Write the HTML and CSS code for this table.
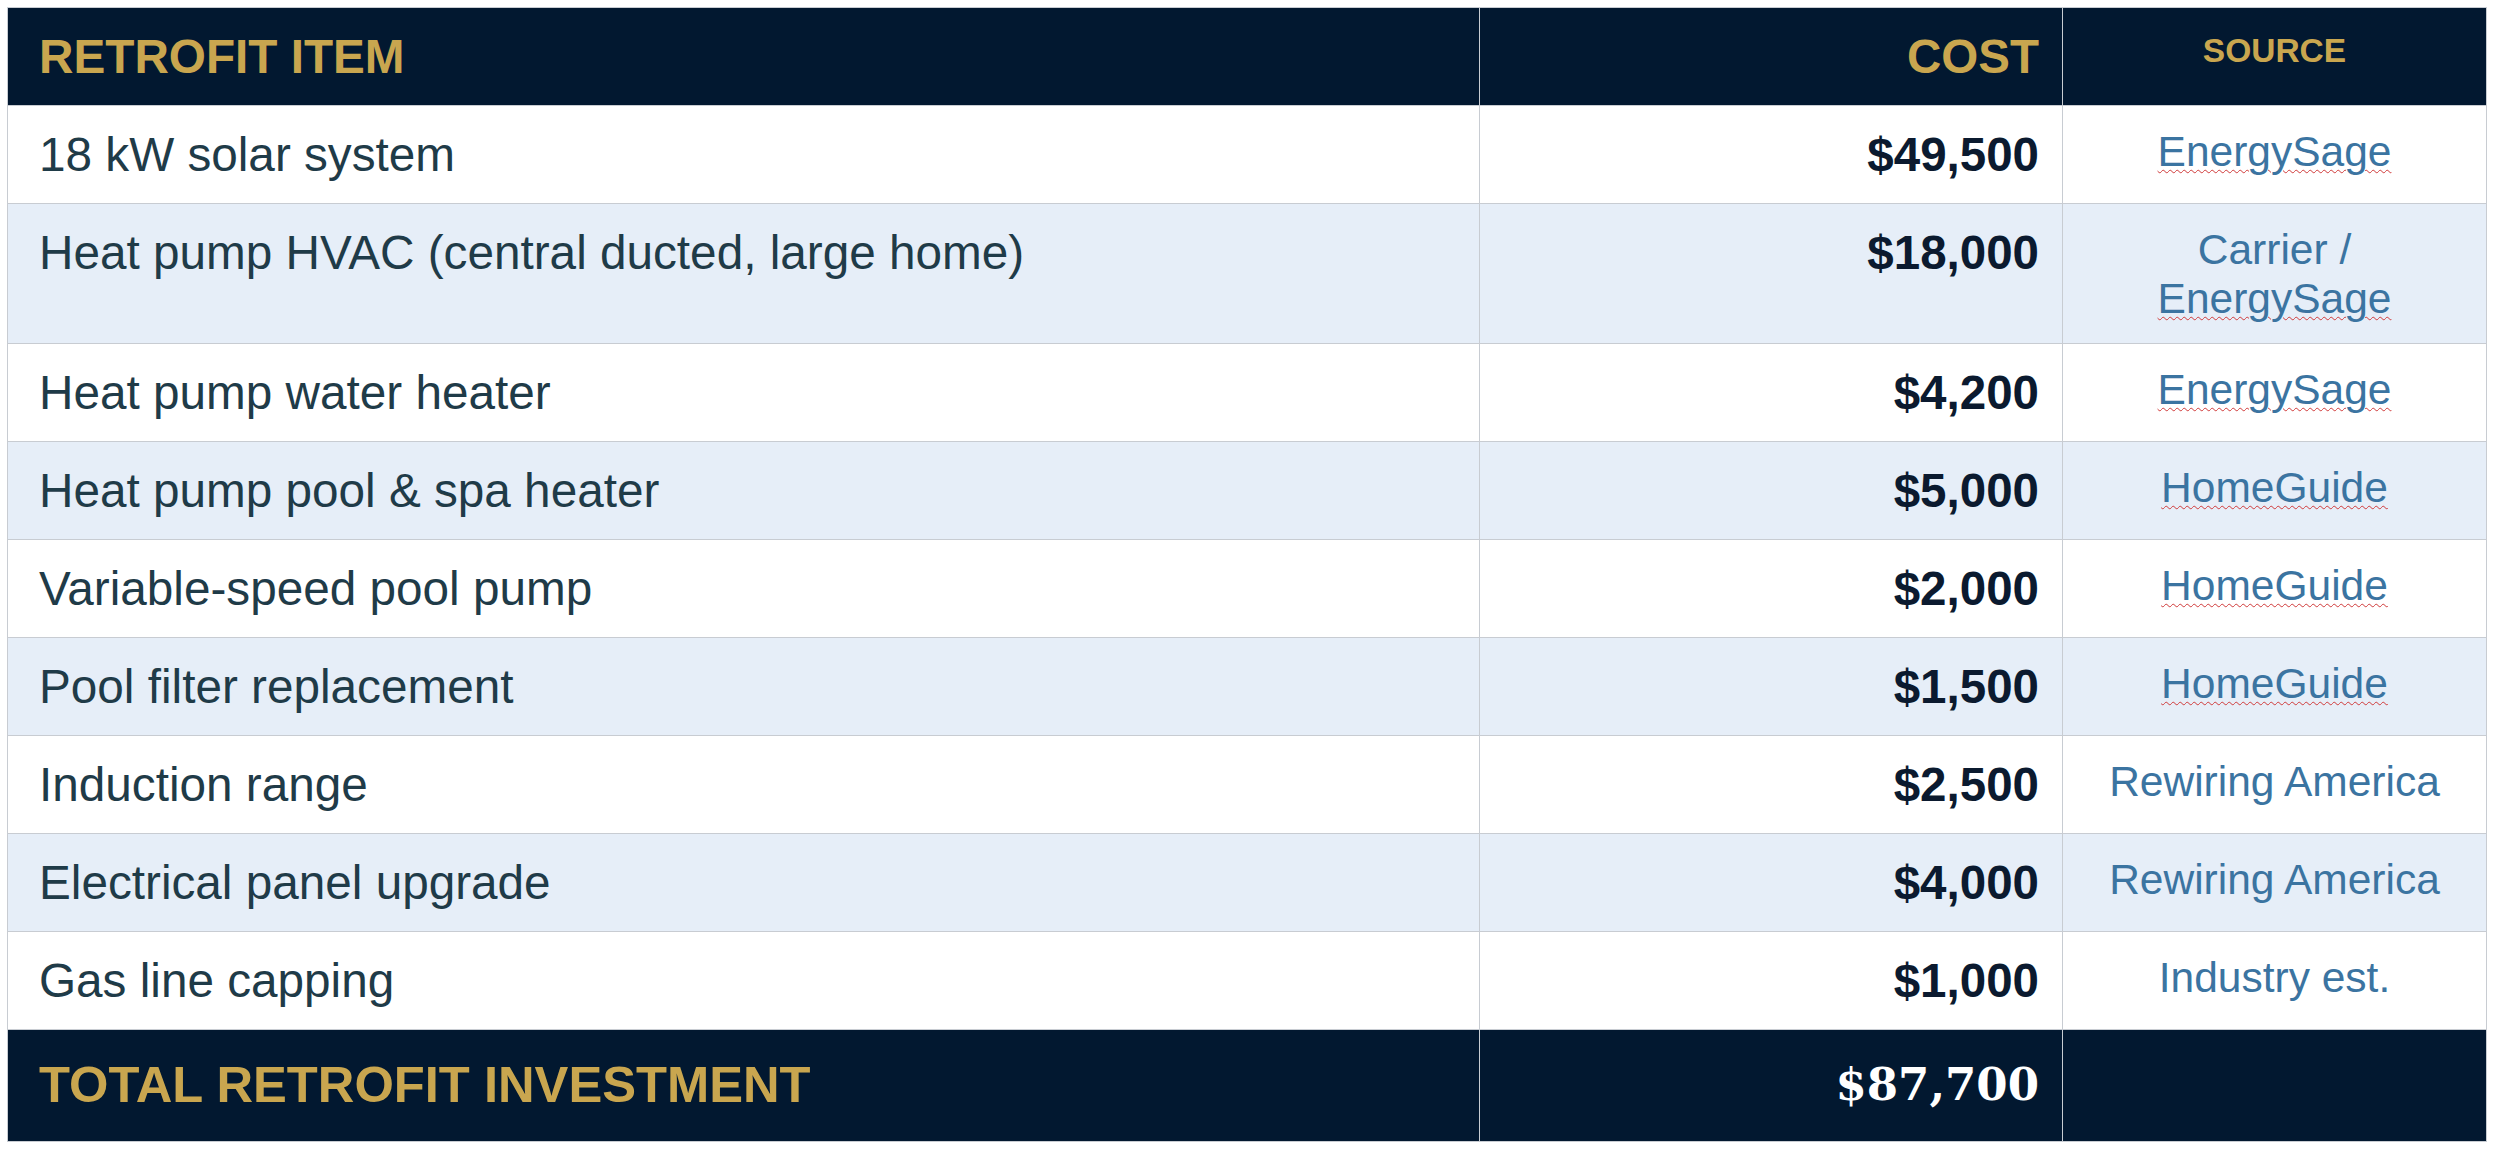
FILE: index.html
```html
<!DOCTYPE html>
<html lang="en">
<head>
<meta charset="utf-8">
<title>Retrofit Costs</title>
<link rel="stylesheet" href="styles.css">
</head>
<body>
<table class="retrofit">
  <colgroup>
    <col class="col-item">
    <col class="col-cost">
    <col class="col-source">
  </colgroup>
  <thead>
    <tr class="head-row">
      <th class="item">RETROFIT ITEM</th>
      <th class="cost">COST</th>
      <th class="source">SOURCE</th>
    </tr>
  </thead>
  <tbody>
    <tr>
      <td class="item">18 kW solar system</td>
      <td class="cost">$49,500</td>
      <td class="source"><span class="spell">EnergySage</span></td>
    </tr>
    <tr class="alt">
      <td class="item">Heat pump HVAC (central ducted, large home)</td>
      <td class="cost">$18,000</td>
      <td class="source">Carrier /<br><span class="spell">EnergySage</span></td>
    </tr>
    <tr>
      <td class="item">Heat pump water heater</td>
      <td class="cost">$4,200</td>
      <td class="source"><span class="spell">EnergySage</span></td>
    </tr>
    <tr class="alt">
      <td class="item">Heat pump pool &amp; spa heater</td>
      <td class="cost">$5,000</td>
      <td class="source"><span class="spell">HomeGuide</span></td>
    </tr>
    <tr>
      <td class="item">Variable-speed pool pump</td>
      <td class="cost">$2,000</td>
      <td class="source"><span class="spell">HomeGuide</span></td>
    </tr>
    <tr class="alt">
      <td class="item">Pool filter replacement</td>
      <td class="cost">$1,500</td>
      <td class="source"><span class="spell">HomeGuide</span></td>
    </tr>
    <tr>
      <td class="item">Induction range</td>
      <td class="cost">$2,500</td>
      <td class="source">Rewiring America</td>
    </tr>
    <tr class="alt">
      <td class="item">Electrical panel upgrade</td>
      <td class="cost">$4,000</td>
      <td class="source">Rewiring America</td>
    </tr>
    <tr>
      <td class="item">Gas line capping</td>
      <td class="cost">$1,000</td>
      <td class="source">Industry est.</td>
    </tr>
  </tbody>
  <tfoot>
    <tr class="total-row">
      <td class="item">TOTAL RETROFIT INVESTMENT</td>
      <td class="cost">$87,700</td>
      <td class="source"></td>
    </tr>
  </tfoot>
</table>
</body>
</html>
```

FILE: styles.css
```css
html, body {
  margin: 0;
  padding: 0;
  background: #ffffff;
}

body {
  padding: 7px 0 0 7px;
  font-family: "Liberation Sans", Arial, sans-serif;
}

.retrofit {
  border-collapse: collapse;
  table-layout: fixed;
  width: 2479px;
  border: 1px solid #c6cad0;
}

.col-item { width: 1472px; }
.col-cost { width: 583px; }
.col-source { width: 424px; }

.retrofit th,
.retrofit td {
  border: 1px solid #c8ccd2;
  vertical-align: top;
  padding: 21px 23px 20px 31px;
  font-size: 47.7px;
  line-height: 56px;
}

/* header */
.head-row th {
  background: #021830;
  color: #c9a64f;
  font-weight: bold;
  text-align: left;
}

.head-row th.cost {
  text-align: right;
  font-size: 47.5px;
}

.head-row th.source {
  text-align: center;
  font-size: 33.5px;
  line-height: 43px;
  padding-left: 10px;
  padding-right: 10px;
}

/* body rows */
tbody td {
  background: #ffffff;
}

tbody tr.alt td {
  background: #e6eef8;
}

tbody td.item {
  color: #1f3b48;
}

tbody td.cost {
  text-align: right;
  font-weight: bold;
  font-size: 47.5px;
  color: #0b1a2f;
}

tbody td.source {
  text-align: center;
  color: #3b74a1;
  font-size: 42.5px;
  line-height: 49px;
  padding-left: 8px;
  padding-right: 8px;
}

.spell {
  text-decoration: underline wavy #d03a3a;
  text-decoration-thickness: 1px;
  text-underline-offset: 3px;
}

/* total */
.total-row td {
  background: #021830;
  padding-top: 24px;
  padding-bottom: 26px;
  line-height: 61px;
}

.total-row td.item {
  color: #c9a64f;
  font-weight: bold;
  font-size: 50.7px;
}

.total-row td.cost {
  text-align: right;
  color: #ffffff;
  font-family: "DejaVu Serif", "Liberation Serif", serif;
  font-weight: bold;
  font-size: 45px;
}
```
